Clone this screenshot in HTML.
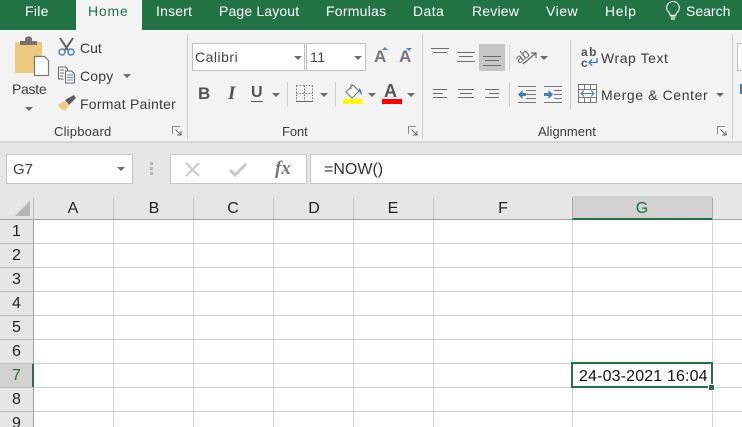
<!DOCTYPE html>
<html><head><meta charset="utf-8"><style>
html,body{margin:0;padding:0;background:#fff}
#p{position:relative;width:742px;height:427px;overflow:hidden;background:#fff;font-family:"Liberation Sans",sans-serif;color:#333}
#p div,#p span,#p svg{position:absolute}
.t{white-space:nowrap;line-height:18px;height:18px;font-size:14px;color:#3b3b3b}
.tab{color:#fff;font-size:14px;top:2px;white-space:nowrap;line-height:18px}
.g{font-size:13px;color:#3a3a3a;white-space:nowrap;line-height:16px}
.ch{top:200px;font-size:16px;line-height:18px;color:#222;text-align:center;width:40px}
.rh{left:0;width:33px;text-align:center;font-size:16px;line-height:18px;color:#222}
.v{width:1px;background:#d4d4d4;top:220px;height:207px}
.h{height:1px;background:#d4d4d4;left:34px;width:708px}
.hs{width:1px;background:#c6c6c6;top:198px;height:21px}
.rs{height:1px;background:#bdbdbd;left:0;width:33px}
.sep{width:1px;background:#cfcfcf}
.arr{width:0;height:0;border-left:4px solid transparent;border-right:4px solid transparent;border-top:4px solid #6a6a6a}
</style></head><body><div id="p">
<!-- title tabs -->
<div style="left:0;top:0;width:742px;height:30px;background:#217346"></div>
<div style="left:76px;top:0;width:66px;height:30px;background:#f3f3f3"></div>
<span class="tab" style="left:25px;letter-spacing:.3px">File</span>
<span class="tab" style="left:88px;color:#217346;letter-spacing:.8px">Home</span>
<span class="tab" style="left:156px;letter-spacing:.2px">Insert</span>
<span class="tab" style="left:219px;letter-spacing:.15px">Page Layout</span>
<span class="tab" style="left:326px;letter-spacing:.25px">Formulas</span>
<span class="tab" style="left:413px;letter-spacing:.4px">Data</span>
<span class="tab" style="left:472px;letter-spacing:.2px">Review</span>
<span class="tab" style="left:546px;letter-spacing:.5px">View</span>
<span class="tab" style="left:605px;letter-spacing:.7px">Help</span>
<svg style="left:663px;top:0" width="20" height="21" viewBox="0 0 20 21"><path d="M10 1.5a6.2 6.2 0 0 0-4 11c.8.8 1.2 1.6 1.3 2.8h5.4c.1-1.2.5-2 1.3-2.8a6.2 6.2 0 0 0-4-11z" fill="none" stroke="#fff" stroke-width="1.1"/><path d="M7.5 17h5M8 19h4" stroke="#fff" stroke-width="1.2"/></svg>
<span class="tab" style="left:686px">Search</span>
<!-- ribbon -->
<div style="left:0;top:30px;width:742px;height:111px;background:#f3f3f3"></div>
<div style="left:0;top:141px;width:742px;height:2px;background:#d6d6d6"></div>
<div class="sep" style="left:187px;top:34px;height:105px"></div>
<div class="sep" style="left:422px;top:34px;height:105px"></div>
<div class="sep" style="left:732px;top:34px;height:105px"></div>
<!-- paste -->
<svg style="left:12px;top:34px" width="40" height="44" viewBox="0 0 40 44"><rect x="3" y="8" width="27" height="31" rx="1" fill="#edc87e"/><path d="M8 11V7h5V4.500a4 4 0 0 1 7 0V7h5v4z" fill="#747474"/><path d="M22.500 22.500h10l4 4v15h-14z" fill="#fff" stroke="#7a7a7a" stroke-width="1.2"/></svg>
<span class="t" style="left:12px;top:80px;letter-spacing:-.3px">Paste</span>
<div class="arr" style="left:25px;top:107px"></div>
<!-- cut copy fp -->
<svg style="left:57px;top:37px" width="20" height="20" viewBox="0 0 20 20"><path d="M3 1l8 12M16 1L8 13" stroke="#606060" stroke-width="2" fill="none"/><circle cx="5" cy="15" r="3" fill="none" stroke="#4a86c0" stroke-width="1.500"/><circle cx="14" cy="15" r="3" fill="none" stroke="#4a86c0" stroke-width="1.500"/></svg>
<span class="t" style="left:80px;top:39px">Cut</span>
<svg style="left:57px;top:65px" width="20" height="20" viewBox="0 0 20 20"><path d="M1.500 2h7l2 2v2M1.500 2v12h5" fill="none" stroke="#666"/><path d="M8.500 6h6l3 3v9h-9z" fill="#fff" stroke="#666"/><path d="M10 10h6M10 12.500h6M10 15h6" stroke="#4a86c0"/><path d="M3 5h4M3 8h4M3 11h3" stroke="#777"/></svg>
<span class="t" style="left:80px;top:67px;letter-spacing:.2px">Copy</span>
<div class="arr" style="left:123px;top:74px"></div>
<svg style="left:57px;top:94px" width="20" height="18" viewBox="0 0 20 18"><path d="M1 11l6-4 5 5-4 5c-2-1-5-3-7-6z" fill="#edc87e"/><path d="M8 6l4 5 7-7-2-3z" fill="#5f5f5f"/></svg>
<span class="t" style="left:80px;top:95px;letter-spacing:.25px">Format Painter</span>
<span class="g" style="left:54px;top:124px;letter-spacing:.2px">Clipboard</span>
<svg style="left:172px;top:126px" width="10" height="10" viewBox="0 0 10 10"><path d="M.500 8V.500H8" fill="none" stroke="#8a8a8a"/><path d="M3.500 3.500L8.500 8.500M9 5v4H5" fill="none" stroke="#666"/></svg>
<!-- font -->
<div style="left:192px;top:43px;width:111px;height:26px;background:#fff;border:1px solid #c0c0c0"></div>
<div style="left:306px;top:43px;width:58px;height:26px;background:#fff;border:1px solid #c0c0c0"></div>
<span class="t" style="left:195px;top:48px;color:#444;letter-spacing:.5px">Calibri</span>
<span class="t" style="left:310px;top:48px;color:#444;letter-spacing:.5px">11</span>
<div class="arr" style="left:294px;top:56px"></div>
<div class="arr" style="left:354px;top:56px"></div>
<span style="left:374px;top:47px;font:bold 17px/20px 'Liberation Sans',sans-serif;color:#777">A</span>
<span style="left:399px;top:47px;font:bold 17px/20px 'Liberation Sans',sans-serif;color:#777">A</span>
<div style="left:382px;top:47px;width:0;height:0;border-left:3px solid transparent;border-right:3px solid transparent;border-bottom:3px solid #4a86c0"></div>
<div style="left:406px;top:48px;width:0;height:0;border-left:3px solid transparent;border-right:3px solid transparent;border-top:3px solid #4a86c0"></div>
<span style="left:198px;top:85px;font:bold 17px/18px 'Liberation Sans',sans-serif;color:#555">B</span>
<span style="left:228px;top:84px;font:italic bold 19px/20px 'Liberation Serif',serif;color:#555">I</span>
<span style="left:251px;top:84px;font:bold 16px/18px 'Liberation Sans',sans-serif;color:#555;border-bottom:1px solid #555;height:17px">U</span>
<div class="arr" style="left:272px;top:93px"></div>
<div class="sep" style="left:287px;top:82px;height:25px"></div>
<svg style="left:296px;top:85px" width="17" height="17" viewBox="0 0 17 17"><path d="M.500.500h16M.500 8.500h16M.500.500v16M8.500.500v16M16.500.500v16" fill="none" stroke="#777" stroke-dasharray="1.500 1.500"/><path d="M0 16.500h17" stroke="#666"/></svg>
<div class="arr" style="left:320px;top:93px"></div>
<div class="sep" style="left:335px;top:82px;height:25px"></div>
<svg style="left:344px;top:83px" width="20" height="17" viewBox="0 0 20 17"><path d="M9 2L2 9l6 6 7-7z" fill="#fff" stroke="#777" stroke-width="1.100"/><path d="M15 5c2 1 3 4 2.500 7-1-1-2-3-2.500-4z" fill="#3c7fbf"/><path d="M7 1v5" stroke="#777"/></svg>
<div style="left:343px;top:99px;width:20px;height:5px;background:#ff0"></div>
<div class="arr" style="left:368px;top:93px"></div>
<span style="left:384px;top:81px;font:bold 18px/20px 'Liberation Sans',sans-serif;color:#555">A</span>
<div style="left:382px;top:99px;width:20px;height:5px;background:#f00"></div>
<div class="arr" style="left:407px;top:93px"></div>
<span class="g" style="left:282px;top:124px;letter-spacing:-.1px">Font</span>
<svg style="left:408px;top:126px" width="10" height="10" viewBox="0 0 10 10"><path d="M.500 8V.500H8" fill="none" stroke="#8a8a8a"/><path d="M3.500 3.500L8.500 8.500M9 5v4H5" fill="none" stroke="#666"/></svg>
<!-- alignment -->
<div style="left:479px;top:44px;width:26px;height:27px;background:#c6c6c6"></div>
<svg style="left:428px;top:44px" width="80" height="60" viewBox="0 0 80 60" shape-rendering="crispEdges"><g stroke="#6e6e6e" fill="none">
<path d="M3 4.500h18M5 8.500h14"/><path d="M29 8.500h18M31 12.500h14M29 17.500h18"/><path d="M55 12.500h18M57 16.500h14M55 21.500h18"/>
<path d="M5 45.500h14M5 49.500h10M5 53.500h14"/><path d="M30 45.500h16M32 49.500h12M30 53.500h16"/><path d="M57 45.500h14M61 49.500h10M57 53.500h14"/></g></svg>
<div class="sep" style="left:509px;top:45px;height:25px"></div>
<svg style="left:516px;top:47px" width="22" height="20" viewBox="0 0 22 20"><g transform="rotate(-38 9 10)"><text x="0" y="12" font-family="Liberation Sans" font-size="13" fill="#666">ab</text></g><path d="M7 17L20 6M15 6h5v5" fill="none" stroke="#666" stroke-width="1.200"/></svg>
<div class="arr" style="left:540px;top:56px"></div>
<div class="sep" style="left:509px;top:82px;height:25px"></div>
<svg style="left:517px;top:86px" width="48" height="18" viewBox="0 0 48 18"><g stroke="#777" fill="none"><path d="M1 .500h18M9 4.500h10M9 8.500h10M9 12.500h10M1 16.500h18M27 .500h18M37 4.500h8M37 8.500h8M37 12.500h8M27 16.500h18"/></g><path d="M1 8.500L5.500 4v3H9v3H5.500v3z" fill="#3c7fbf"/><path d="M36 8.500L31.500 4v3H27v3h4.500v3z" fill="#3c7fbf"/></svg>
<div class="sep" style="left:570px;top:40px;height:70px"></div>
<span style="left:581px;top:47px;font:bold 12px/11px 'Liberation Sans',sans-serif;color:#555;letter-spacing:1.500px">ab</span>
<span style="left:581px;top:58px;font:bold 12px/11px 'Liberation Sans',sans-serif;color:#555">c</span>
<svg style="left:587px;top:57px" width="12" height="10" viewBox="0 0 12 10"><path d="M10 1v4.500H2M5 2.500L2 5.500l3 3" fill="none" stroke="#3c7fbf" stroke-width="1.300"/></svg>
<span class="t" style="left:601px;top:49px;letter-spacing:.55px">Wrap Text</span>
<svg style="left:578px;top:84px" width="19" height="19" viewBox="0 0 19 19" shape-rendering="crispEdges"><rect x=".5" y=".5" width="18" height="18" fill="#fff" stroke="#777"/><path d="M0 5.500h19M0 13.500h19M6.500 0v5M12.500 0v5M6.500 14v5M12.500 14v5" stroke="#777"/></svg>
<svg style="left:580px;top:89px" width="15" height="9" viewBox="0 0 15 9"><path d="M1 4.500h13M4 1.500l-3 3 3 3M11 1.500l3 3-3 3" fill="none" stroke="#3c7fbf"/></svg>
<span class="t" style="left:601px;top:86px;letter-spacing:.6px">Merge &amp; Center</span>
<div class="arr" style="left:716px;top:93px"></div>
<span class="g" style="left:538px;top:124px">Alignment</span>
<svg style="left:717px;top:126px" width="10" height="10" viewBox="0 0 10 10"><path d="M.500 8V.500H8" fill="none" stroke="#8a8a8a"/><path d="M3.500 3.500L8.500 8.500M9 5v4H5" fill="none" stroke="#666"/></svg>
<div style="left:737px;top:43px;width:5px;height:26px;background:#fff;border:1px solid #c0c0c0;border-right:0"></div>
<div style="left:740px;top:84px;width:2px;height:10px;background:#3c7fbf"></div>
<!-- formula bar -->
<div style="left:0;top:143px;width:742px;height:77px;background:#e6e6e6"></div>
<div style="left:6px;top:154px;width:125px;height:28px;background:#fff;border:1px solid #c6c6c6"></div>
<span class="t" style="left:13px;top:161px;color:#444;font-size:15px">G7</span>
<div class="arr" style="left:117px;top:167px"></div>
<div style="left:150px;top:162px;width:3px;height:3px;background:#b5b5b5;box-shadow:0 5px #b5b5b5,0 10px #b5b5b5"></div>
<div style="left:170px;top:154px;width:135px;height:28px;background:#fff;border:1px solid #c6c6c6"></div>
<svg style="left:185px;top:162px" width="15" height="15" viewBox="0 0 15 15"><path d="M1 1l13 13M14 1L1 14" stroke="#c9c9c9" stroke-width="2"/></svg>
<svg style="left:229px;top:163px" width="18" height="14" viewBox="0 0 18 14"><path d="M1 7l5 5L17 1" fill="none" stroke="#c9c9c9" stroke-width="3"/></svg>
<span style="left:275px;top:158px;font:italic bold 19px/22px 'Liberation Serif',serif;color:#777">fx</span>
<div style="left:310px;top:154px;width:432px;height:28px;background:#fff;border:1px solid #c6c6c6;border-right:0"></div>
<span class="t" style="left:324px;top:161px;color:#333;font-size:16px">=NOW()</span>
<!-- grid -->
<div style="left:0;top:196px;width:742px;height:24px;background:#e6e6e6"></div>
<div style="left:572px;top:196px;width:140px;height:23px;background:#d2d2d2"></div>
<div style="left:0;top:219px;width:742px;height:1px;background:#a0a0a0"></div>
<div style="left:572px;top:218px;width:140px;height:2px;background:#217346"></div>
<svg style="left:14px;top:200px" width="17" height="17"><path d="M16 1v15H1z" fill="#b5b5b5"/></svg>
<div class="hs" style="left:33px;background:#bdbdbd;height:22px"></div>
<div class="hs" style="left:113px"></div><div class="hs" style="left:193px"></div><div class="hs" style="left:273px"></div><div class="hs" style="left:353px"></div><div class="hs" style="left:433px"></div><div class="hs" style="left:572px;background:#aaa"></div><div class="hs" style="left:712px;background:#aaa"></div>
<span class="ch" style="left:53px">A</span><span class="ch" style="left:134px">B</span><span class="ch" style="left:213px">C</span><span class="ch" style="left:294px">D</span><span class="ch" style="left:373px">E</span><span class="ch" style="left:483px">F</span><span class="ch" style="left:622px;color:#1f6a40">G</span>
<div style="left:0;top:220px;width:33px;height:207px;background:#e6e6e6"></div>
<div style="left:33px;top:220px;width:1px;height:207px;background:#a0a0a0"></div>
<div style="left:0;top:364px;width:33px;height:23px;background:#d2d2d2"></div>
<div style="left:32px;top:364px;width:2px;height:23px;background:#217346"></div>
<div class="v" style="left:113px"></div><div class="v" style="left:193px"></div><div class="v" style="left:273px"></div><div class="v" style="left:353px"></div><div class="v" style="left:433px"></div><div class="v" style="left:572px"></div><div class="v" style="left:712px"></div>
<div class="h" style="top:243px"></div><div class="h" style="top:267px"></div><div class="h" style="top:291px"></div><div class="h" style="top:315px"></div><div class="h" style="top:339px"></div><div class="h" style="top:363px"></div><div class="h" style="top:387px"></div><div class="h" style="top:411px"></div>
<div class="rs" style="top:243px"></div><div class="rs" style="top:267px"></div><div class="rs" style="top:291px"></div><div class="rs" style="top:315px"></div><div class="rs" style="top:339px"></div><div class="rs" style="top:363px"></div><div class="rs" style="top:387px"></div><div class="rs" style="top:411px"></div>
<span class="rh" style="top:223px">1</span><span class="rh" style="top:247px">2</span><span class="rh" style="top:271px">3</span><span class="rh" style="top:295px">4</span><span class="rh" style="top:319px">5</span><span class="rh" style="top:343px">6</span><span class="rh" style="top:367px;color:#1f6a40">7</span><span class="rh" style="top:391px">8</span><span class="rh" style="top:415px">9</span>
<!-- selected -->
<div style="left:571px;top:362px;width:138px;height:22px;border:2px solid #217346"></div>
<div style="left:708px;top:384px;width:5px;height:5px;background:#217346;border:1px solid #fff"></div>
<span style="left:579px;top:368px;font-size:16px;line-height:18px;color:#111;white-space:nowrap;letter-spacing:.15px">24-03-2021 16:04</span>
</div></body></html>
